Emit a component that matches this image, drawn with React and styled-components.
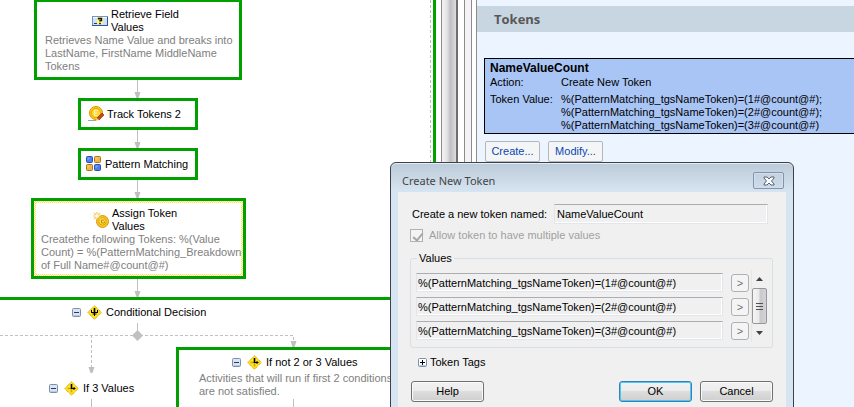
import styled, { createGlobalStyle } from 'styled-components'

const GlobalStyle = createGlobalStyle`
  * {
    box-sizing: border-box;
  }
  body {
    margin: 0;
    background: #fff;
    color: #000;
    font: 11px/13px 'Liberation Sans', Arial, sans-serif;
  }
  button, input {
    font: inherit;
    color: inherit;
  }
`

const Shell = styled.main`
  position: relative;
  display: flex;
  height: 100vh;
  overflow: hidden;
`

/* ---------- workflow canvas ---------- */

const Canvas = styled.section`
  position: relative;
  flex: 0 0 441px;
  overflow: hidden;
  background: #fff;
`

const Wires = styled.svg`
  position: absolute;
  left: 0;
  top: 0;
  width: 100%;
  height: 100%;
`

const Node = styled.article`
  position: absolute;
  left: ${(p) => p.$x}px;
  top: ${(p) => p.$y}px;
  width: ${(p) => p.$w}px;
  height: ${(p) => p.$h}px;
  border: 3px solid #00a000;
  padding: 2px;
  background: ${(p) =>
    p.$selected
      ? 'repeating-conic-gradient(#ffe040 0 25%, #fff 0 50%) 0 0 / 2px 2px'
      : '#fff'};
`

const NodeBody = styled.div`
  height: 100%;
  padding: ${(p) => p.$pad};
  background: #fff;
`

const NodeHead = styled.div`
  display: flex;
  align-items: center;
  gap: 3px;
  padding-left: ${(p) => p.$indent || 0}px;
  white-space: pre;
`

const NodeText = styled.p`
  margin: 0;
  color: #808080;
  white-space: pre;
`

const Branch = styled.div`
  position: absolute;
  left: ${(p) => p.$x}px;
  top: ${(p) => p.$y}px;
  display: flex;
  align-items: center;
  gap: 4px;
  white-space: nowrap;
`

const Toggle = styled.button`
  display: block;
  flex: none;
  width: 9px;
  height: 9px;
  margin-right: ${(p) => p.$gap || 0}px;
  padding: 0;
  border: 0;
  background: none;
  line-height: 0;
`

/* ---------- splitter between the canvas and the settings ---------- */

const ScrollTrack = styled.div`
  flex: 0 0 17px;
  border-left: 1px solid #8c8c8c;
  border-right: 2px solid #6e6e6e;
  background: linear-gradient(90deg, #f4f4f4, #e4e4e4 35%, #c0c0c4 60%, #dcdcdc 100%);
`

const Gutter = styled.div`
  flex: 0 0 ${(p) => p.$w}px;
  border-right: 1px solid #8c8c8c;
  background: ${(p) => p.$bg};
`

/* ---------- settings pane ---------- */

const Pane = styled.section`
  flex: 1;
  min-width: 0;
  padding-top: 6px;
  overflow: hidden;
  background: #ebf4ff;
`

const PaneTitle = styled.h2`
  margin: 0 0 26px;
  padding: 0 17px;
  background: #c8d6e2;
  color: #585858;
  font: bold 13px/26px 'Open Sans', 'Noto Sans', sans-serif;
`

const TokenCard = styled.div`
  margin: 0 -1px 7px 7px;
  padding: 3px 5px 1px;
  border: 1px solid #000;
  background: #a9c5f6;
`

const TokenName = styled.strong`
  display: block;
  font-size: 12px;
  line-height: 13px;
`

const TokenFields = styled.dl`
  display: grid;
  grid-template-columns: 71px 1fr;
  row-gap: 4px;
  margin: 1px 0 0;
  white-space: pre;
  dd {
    margin: 0;
  }
`

const LinkRow = styled.div`
  display: flex;
  gap: 8px;
  padding-left: 8px;
`

const LinkButton = styled.button`
  width: 55px;
  height: 21px;
  padding: 0;
  border: 1px solid #b4b8bc;
  border-radius: 2px;
  background: #f4f5f6;
  color: #0a48b0;
`

/* ---------- dialog ---------- */

const Dialog = styled.div`
  position: absolute;
  left: 390px;
  top: 162px;
  width: 404px;
  padding: 0 7px 7px;
  border: 1px solid #3c4248;
  border-radius: 6px 6px 0 0;
  background: linear-gradient(#bccbd9, #d7e4f2 29px);
  box-shadow: inset 0 1px 0 #e4ecf4;
`

const TitleBar = styled.header`
  display: flex;
  align-items: center;
  justify-content: space-between;
  height: 29px;
  padding: 6px 2px 0 4px;
  color: #454545;
  font: 12px/16px 'Noto Sans', 'Open Sans', sans-serif;
  font-size: 11px;
`

const CloseButton = styled.button`
  display: grid;
  place-items: center;
  width: 31px;
  height: 17px;
  padding: 0;
  border: 1px solid #8492ac;
  border-radius: 2px;
  background: linear-gradient(#c3d1e0, #cedbe9);
  box-shadow: inset 0 0 0 1px #d4dfeb;
`

const DialogBody = styled.form`
  padding: 12px 13px 15px 12px;
  background: #f0f0f0;
`

const NameRow = styled.div`
  display: flex;
  align-items: center;
  padding: 0 5px 0 2px;
  label {
    width: 142px;
  }
`

const TextBox = styled.input`
  flex: 1;
  min-width: 0;
  height: 20px;
  padding: 0 2px;
  border: 1px solid #e2e6ec;
  border-top-color: #abadb3;
  outline: 0;
  background: #f0f0f0;
  box-shadow: inset -1px -1px 0 #fff;
`

const CheckRow = styled.label`
  display: flex;
  align-items: center;
  gap: 6px;
  margin-top: 5px;
  color: #a0a0a0;
`

const CheckBox = styled.input`
  appearance: none;
  width: 13px;
  height: 13px;
  margin: 0;
  border: 1px solid #b1b1b1;
  background: #f4f4f4;
  position: relative;
  &:checked::after {
    content: '';
    position: absolute;
    left: 4px;
    top: 1px;
    width: 4px;
    height: 8px;
    border: solid #a8a8a8;
    border-width: 0 2px 2px 0;
    transform: rotate(40deg);
  }
`

const Values = styled.fieldset`
  margin: 10px 0 0;
  padding: 5px;
  border: 1px solid #d5dfe5;
  border-radius: 3px;
  min-width: 0;
  legend {
    margin-left: 1px;
    padding: 0 2px;
    line-height: 13px;
  }
`

const ValuesBody = styled.div`
  display: flex;
  gap: 2px;
`

const ValueList = styled.div`
  flex: 1;
  display: grid;
  align-content: start;
  gap: 5px;
  padding-top: 3px;
`

const ValueRow = styled.div`
  display: flex;
  align-items: center;
  gap: 8px;
  height: 19px;
`

const ValueBox = styled(TextBox)`
  height: 19px;
  padding: 0 1px;
`

const PickButton = styled.button`
  width: 18px;
  height: 18px;
  padding: 0;
  border: 1px solid #adb2b5;
  border-radius: 3px;
  background: #f4f4f4;
  color: #707070;
  line-height: 14px;
`

const Scroller = styled.div`
  display: flex;
  flex-direction: column;
  align-items: center;
  width: 16px;
  height: 72px;
  background: #f0f0f0;
  border-left: 1px solid #e6e6e6;
`

const ScrollArrow = styled.button`
  display: grid;
  place-items: center;
  width: 15px;
  height: 18px;
  padding: 0;
  border: 0;
  background: none;
`

const Thumb = styled.div`
  display: grid;
  place-items: center;
  width: 15px;
  height: 36px;
  border: 1px solid #979797;
  border-radius: 2px;
  background: linear-gradient(90deg, #f5f5f5, #e9e9eb 48%, #c8c8cc 52%, #d4d4d8);
`

const TagsRow = styled.div`
  display: flex;
  align-items: center;
  gap: 3px;
  margin: 8px 0 12px 8px;
`

const Actions = styled.footer`
  display: flex;
  gap: 8px;
  padding-left: 1px;
`

const PushButton = styled.button`
  width: 73px;
  height: 21px;
  padding: 0;
  border: 1px solid ${(p) => (p.$primary ? '#3c7fb1' : '#707070')};
  border-radius: 3px;
  background: linear-gradient(#f2f2f2, #ebebeb 50%, #dddddd 50%, #cfcfcf);
  box-shadow: inset 0 0 0 1px ${(p) => (p.$primary ? '#48c8f2' : '#fafafa')};
  &:first-child {
    margin-right: auto;
  }
`

function FieldIcon() {
  return (
    <svg width="16" height="16" viewBox="0 0 16 16">
      <rect x="0.5" y="3.5" width="15" height="9" fill="#cfe0fa" stroke="#6f93cc" />
      <path d="M1 4.5h14" stroke="#fff" />
      <path d="M0 12.5h16M15.5 4v9" stroke="#2f539a" />
      <rect x="5" y="4" width="6" height="7" fill="#fff47a" />
      <path d="M2 10.5h3" stroke="#333" />
      <path d="M6.5 6.5v-1h3v2H8v1M7.2 10.5h1.6" stroke="#111" strokeWidth="1.3" fill="none" />
    </svg>
  )
}

function TrackIcon() {
  return (
    <svg width="16" height="16" viewBox="0 0 16 16">
      <circle cx="8" cy="7" r="6.6" fill="#f7c51d" stroke="#dfa010" />
      <circle cx="8" cy="7" r="4.6" fill="#ffd83c" stroke="#e8aa12" />
      <path d="M6 4.5h4M6 7h3M6 9.5h3M6.500 4.500v5" stroke="#fff3a6" fill="none" />
      <path d="M9 12l5-5 2 2-5 5z" fill="#c8481c" stroke="#8e2c10" strokeWidth="0.7" />
      <path d="M9 12l-1.500 3L11 14z" fill="#f2cc90" />
      <path d="M0 14.500h8" stroke="#a4a4a4" />
    </svg>
  )
}

function PatternIcon() {
  const cells = [
    [0, 0, '#4d7eea', '#2950b4'],
    [8, 0, '#edb645', '#a87420'],
    [0, 8, '#edb645', '#a87420'],
    [8, 8, '#4d7eea', '#2950b4'],
  ]
  return (
    <svg width="16" height="16" viewBox="0 0 16 16">
      {cells.map(([x, y, fill, edge]) => (
        <g key={`${x}-${y}`}>
          <rect x={x + 0.5} y={y + 0.5} width="6" height="6" rx="1" fill={fill} stroke={edge} />
          <path d={`M${x + 2} ${y + 4}v-2h2`} stroke="#fff" strokeOpacity="0.35" fill="none" />
        </g>
      ))}
    </svg>
  )
}

function AssignIcon() {
  return (
    <svg width="16" height="16" viewBox="0 0 16 16">
      <circle cx="9.5" cy="9.5" r="6" fill="#f7c51d" stroke="#d99a10" />
      <circle cx="9.5" cy="9.3" r="3.8" fill="#ffdb48" stroke="#e4a510" />
      <path d="M11.5 8h-3v3h3V9.5" stroke="#c98e0c" fill="none" />
      <path d="M4 0v8M0 4h8M1 1l6 6M7 1L1 7" stroke="#f3c766" strokeWidth="1.2" />
      <path d="M4 2v4M2 4h4" stroke="#fffbe0" strokeWidth="1.6" />
    </svg>
  )
}

function DecisionIcon({ branch }) {
  return (
    <svg width="15" height="15" viewBox="0 0 15 15">
      <path d="M7.5 0.7L14.3 7.5 7.5 14.3 0.7 7.5z" fill="#ffdf10" stroke="#cfa800" strokeDasharray="1.3 0.7" />
      <path d="M7.5 2L13 7.5 7.5 13 2 7.5z" fill="#ffe52c" />
      {branch ? (
        <path d="M3.5 7.5h4M7.5 7.5v4" stroke="#d8a500" strokeWidth="1.6" />
      ) : (
        <path d="M4.5 5v3M10.500 5v3M7.500 7v4M5.500 9h4" stroke="#000" fill="none" />
      )}
      <path d="M7.5 3v5" stroke="#000" strokeWidth="1.6" />
      {branch ? (
        <path d="M7.5 7.5h4M10 6v3" stroke="#000" fill="none" />
      ) : (
        <path d="M4 7.5h7" stroke="#000" fill="none" />
      )}
    </svg>
  )
}

function ExpandBox({ label, open, gap }) {
  return (
    <Toggle type="button" aria-label={label} aria-expanded={open} $gap={gap}>
      <svg width="9" height="9" viewBox="0 0 9 9">
        <rect x="0.5" y="0.5" width="8" height="8" rx="1" fill={open ? '#dbe4f1' : '#fff'} stroke="#7b90ae" />
        <path d="M1 7.5h7" stroke="#bac8dc" />
        <path d={open ? 'M2 4.5h5' : 'M2 4.5h5M4.5 2v5'} stroke={open ? '#243a72' : '#000'} />
      </svg>
    </Toggle>
  )
}

function Connectors() {
  const arrows = [
    [137, 98],
    [137, 148],
    [137, 198],
    [137, 297],
    [91, 373],
    [293, 347],
  ]
  return (
    <Wires aria-hidden="true">
      <path d="M433 0h3v407h-3z" fill="#00a000" />
      <path d="M0 297h433v3H0z" fill="#00a000" />
      <g stroke="#c0c0c0" fill="none">
        <path d="M137.5 80v16M137.5 130v16M137.5 180v16M137.5 279v16M137.5 323v8M91.5 399v8" />
        <path d="M0 335.5h293.5v8M91.5 335v32" strokeDasharray="3 2" />
        <path d="M430.5 0v407" strokeDasharray="3 2" />
      </g>
      <g fill="#c0c0c0">
        {arrows.map(([x, y]) => (
          <path key={`${x}-${y}`} d={`M${x - 2.5} ${y - 6}h6l-2 6h-2z`} />
        ))}
        <path d="M137.5 330l5.5 5.5-5.5 5.5-5.5-5.5z" />
      </g>
    </Wires>
  )
}

function Workflow() {
  return (
    <Canvas>
      <Connectors />
      <Node $x={34} $y={-1} $w={208} $h={81}>
        <NodeBody $pad="4px 6px">
          <NodeHead $indent={47}>
            <FieldIcon />
            <span>{'Retrieve Field\nValues'}</span>
          </NodeHead>
          <NodeText>
            {'Retrieves Name Value and breaks into\nLastName, FirstName MiddleName\nTokens'}
          </NodeText>
        </NodeBody>
      </Node>
      <Node $x={78} $y={98} $w={120} $h={32}>
        <NodeBody $pad="3px 5px">
          <NodeHead>
            <TrackIcon />
            <span>Track Tokens 2</span>
          </NodeHead>
        </NodeBody>
      </Node>
      <Node $x={78} $y={148} $w={120} $h={32}>
        <NodeBody $pad="3px">
          <NodeHead>
            <PatternIcon />
            <span>Pattern Matching</span>
          </NodeHead>
        </NodeBody>
      </Node>
      <Node $x={31} $y={198} $w={215} $h={81} $selected>
        <NodeBody $pad="4px 5px">
          <NodeHead $indent={52}>
            <AssignIcon />
            <span>{'Assign Token\nValues'}</span>
          </NodeHead>
          <NodeText>
            {'Createthe following Tokens: %(Value\nCount) = %(PatternMatching_Breakdown\nof Full Name#@count@#)'}
          </NodeText>
        </NodeBody>
      </Node>
      <Branch $x={72} $y={305}>
        <ExpandBox label="Collapse Conditional Decision" open gap={2} />
        <DecisionIcon />
        <span>Conditional Decision</span>
      </Branch>
      <Branch $x={49} $y={381}>
        <ExpandBox label="Collapse If 3 Values" open gap={2} />
        <DecisionIcon branch />
        <span>If 3 Values</span>
      </Branch>
      <Node $x={176} $y={347} $w={240} $h={90}>
        <NodeBody $pad="20px 18px 0">
          <NodeText>
            {'Activities that will run if first 2 conditions\nare not satisfied.'}
          </NodeText>
        </NodeBody>
      </Node>
      <Branch $x={232} $y={355}>
        <ExpandBox label="Collapse If not 2 or 3 Values" open gap={2} />
        <DecisionIcon branch />
        <span>If not 2 or 3 Values</span>
      </Branch>
      <Wires aria-hidden="true">
        <path d="M293.5 399v8" stroke="#c0c0c0" />
      </Wires>
    </Canvas>
  )
}

function TokenPane() {
  return (
    <Pane>
      <PaneTitle>Tokens</PaneTitle>
      <TokenCard>
        <TokenName>NameValueCount</TokenName>
        <TokenFields>
          <dt>Action:</dt>
          <dd>Create New Token</dd>
          <dt>Token Value:</dt>
          <dd>
            {'%(PatternMatching_tgsNameToken)=(1#@count@#);\n%(PatternMatching_tgsNameToken)=(2#@count@#);\n%(PatternMatching_tgsNameToken)=(3#@count@#)'}
          </dd>
        </TokenFields>
      </TokenCard>
      <LinkRow>
        <LinkButton type="button">Create...</LinkButton>
        <LinkButton type="button">Modify...</LinkButton>
      </LinkRow>
    </Pane>
  )
}

function TokenDialog() {
  return (
    <Dialog role="dialog" aria-labelledby="dialog-title">
      <TitleBar>
        <span id="dialog-title">Create New Token</span>
        <CloseButton type="button" aria-label="Close">
          <svg width="12" height="10" viewBox="0 0 12 10">
            <path
              d="M1 1h3l2 2 2-2h3v1L8.5 5 11 8v1H8L6 7 4 9H1V8l2.5-3L1 2z"
              fill="#fff"
              stroke="#55607a"
            />
          </svg>
        </CloseButton>
      </TitleBar>
      <DialogBody>
        <NameRow>
          <label htmlFor="token-name">Create a new token named:</label>
          <TextBox id="token-name" defaultValue="NameValueCount" readOnly />
        </NameRow>
        <CheckRow>
          <CheckBox type="checkbox" defaultChecked disabled />
          Allow token to have multiple values
        </CheckRow>
        <Values>
          <legend>Values</legend>
          <ValuesBody>
            <ValueList>
              {[1, 2, 3].map((n) => (
                <ValueRow key={n}>
                  <ValueBox
                    aria-label={`Value ${n}`}
                    defaultValue={`%(PatternMatching_tgsNameToken)=(${n}#@count@#)`}
                    readOnly
                  />
                  <PickButton type="button">&gt;</PickButton>
                </ValueRow>
              ))}
            </ValueList>
            <Scroller>
              <ScrollArrow type="button" aria-label="Scroll up">
                <svg width="7" height="4" viewBox="0 0 7 4">
                  <path d="M0 4l3.5-4L7 4z" fill="#404040" />
                </svg>
              </ScrollArrow>
              <Thumb>
                <svg width="7" height="9" viewBox="0 0 7 9">
                  <path d="M0 1.5h7M0 4.5h7M0 7.5h7" stroke="#505050" />
                </svg>
              </Thumb>
              <ScrollArrow type="button" aria-label="Scroll down">
                <svg width="7" height="4" viewBox="0 0 7 4">
                  <path d="M0 0l3.5 4L7 0z" fill="#404040" />
                </svg>
              </ScrollArrow>
            </Scroller>
          </ValuesBody>
        </Values>
        <TagsRow>
          <ExpandBox label="Expand Token Tags" open={false} />
          <span>Token Tags</span>
        </TagsRow>
        <Actions>
          <PushButton type="button">Help</PushButton>
          <PushButton type="submit" $primary>OK</PushButton>
          <PushButton type="button">Cancel</PushButton>
        </Actions>
      </DialogBody>
    </Dialog>
  )
}

function App() {
  return (
    <>
      <GlobalStyle />
      <Shell>
        <Workflow />
        <ScrollTrack />
        <Gutter $w={7} $bg="#fff" />
        <Gutter $w={7} $bg="#f4f2f4" />
        <Gutter $w={5} $bg="#fff" />
        <TokenPane />
        <TokenDialog />
      </Shell>
    </>
  )
}

export default App
